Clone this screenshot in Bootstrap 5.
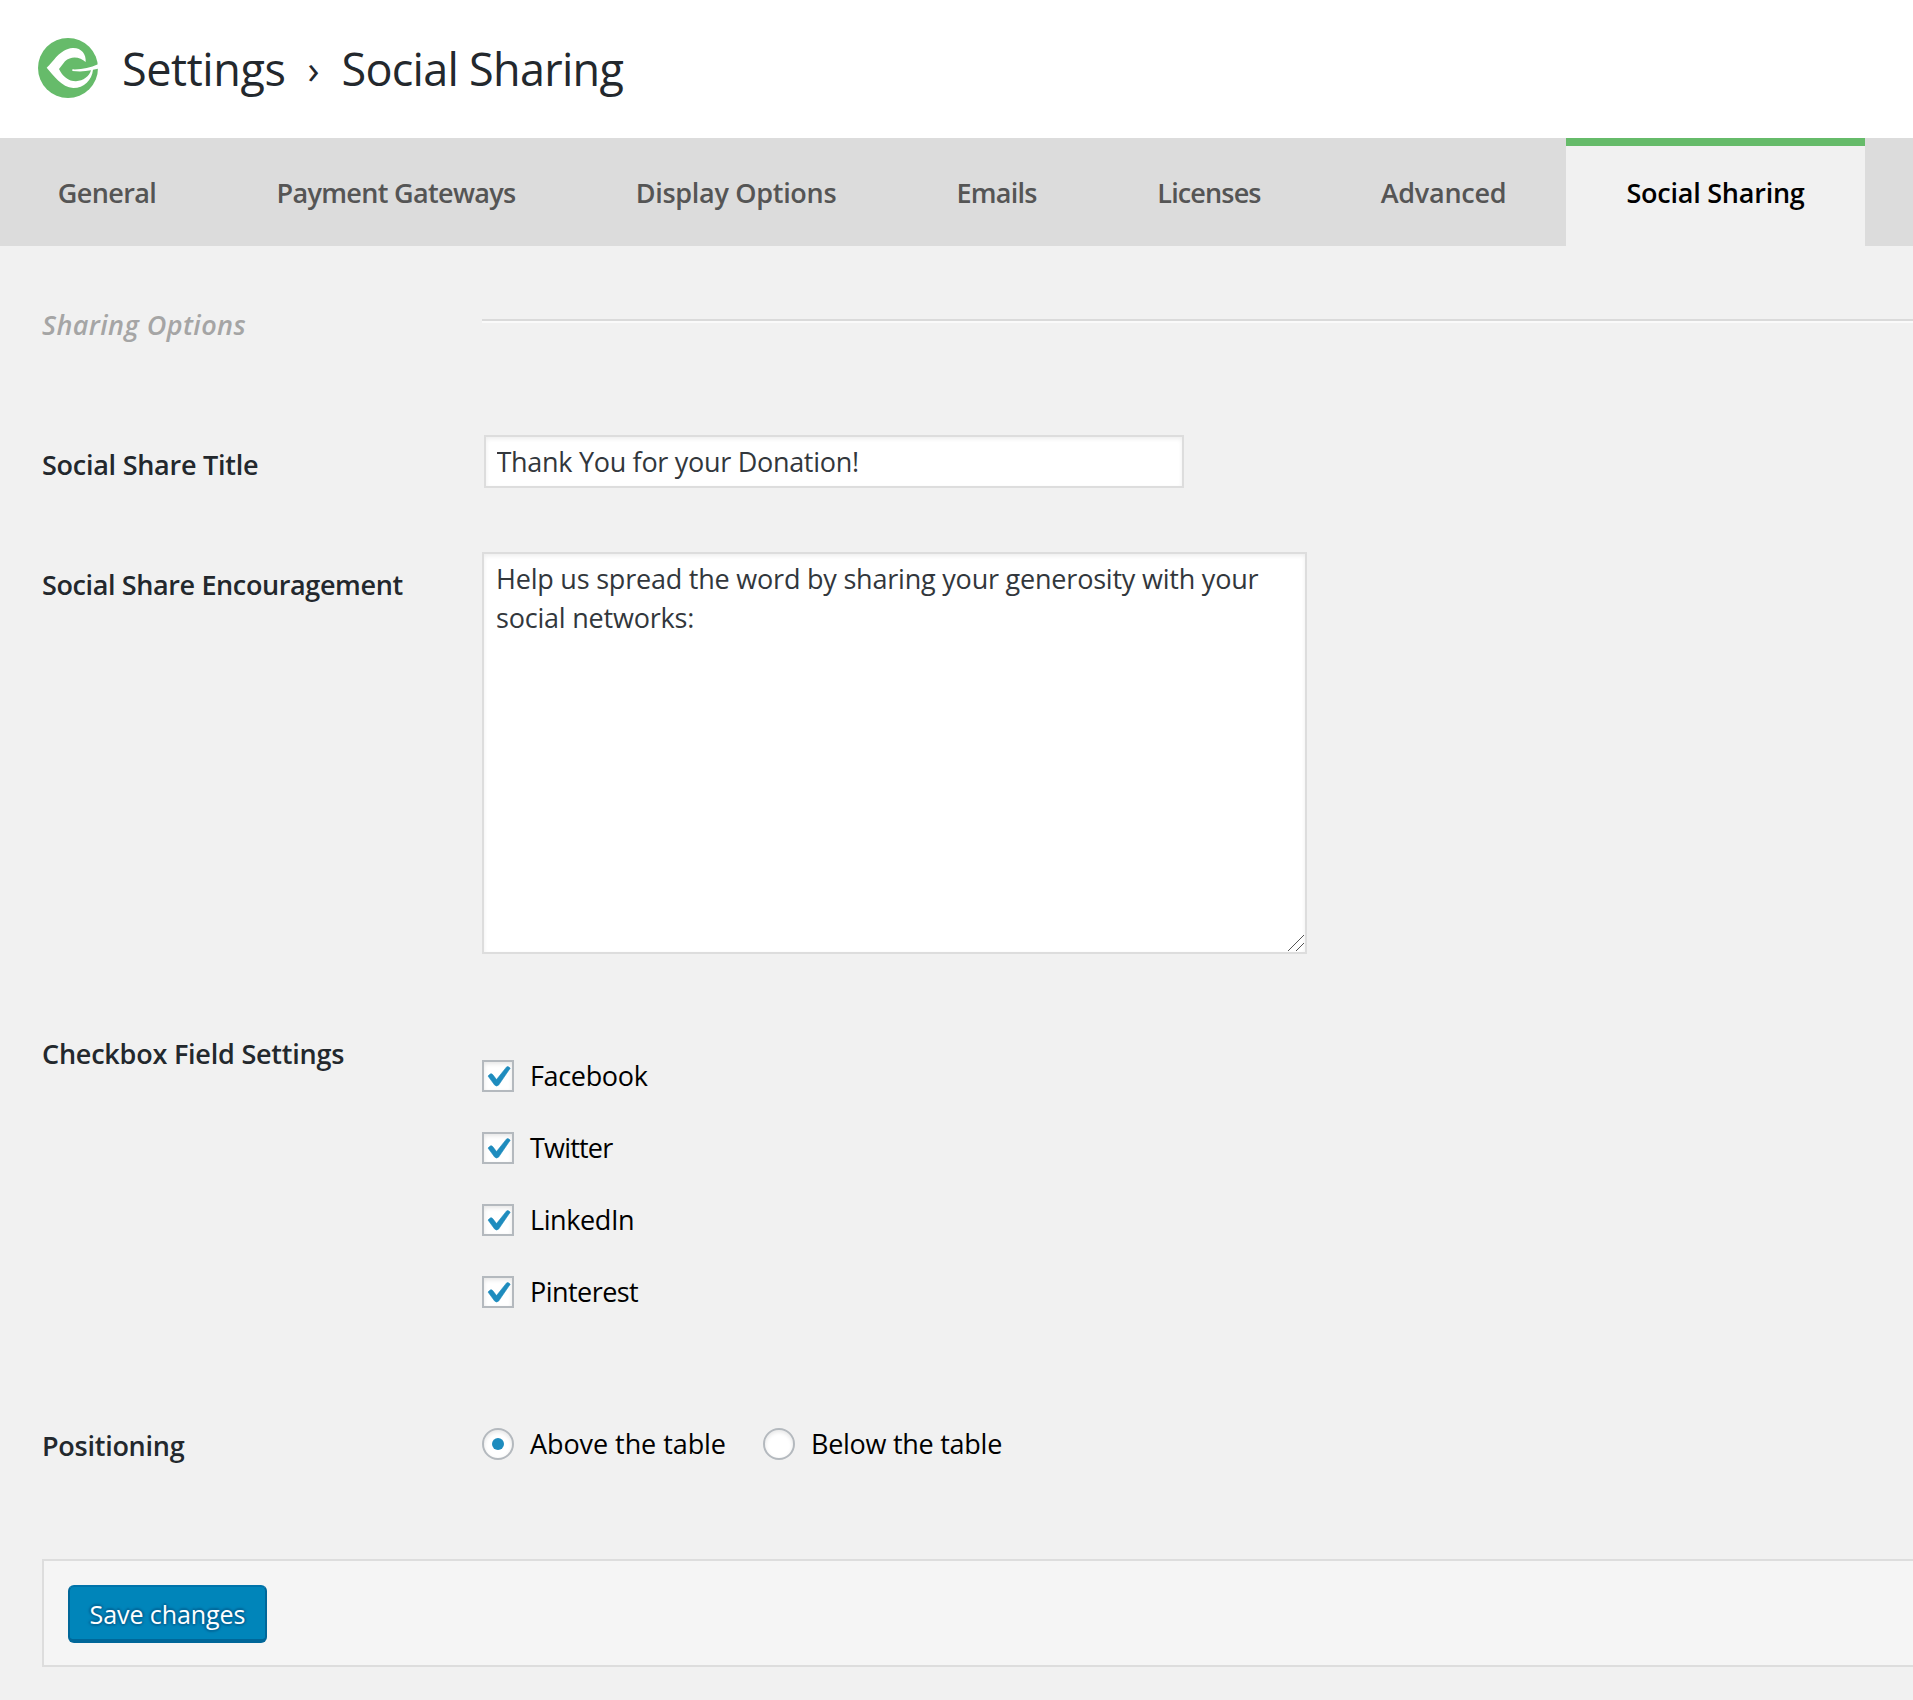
<!DOCTYPE html>
<html lang="en">
<head>
<meta charset="utf-8">
<meta name="viewport" content="width=device-width, initial-scale=1">
<title>Settings › Social Sharing</title>
<link rel="stylesheet" href="https://cdn.jsdelivr.net/npm/bootstrap@5.3.0/dist/css/bootstrap.min.css">
<style>
  body { background: #f1f1f1; color: #23282d; font-family: "Open Sans", "Noto Sans", sans-serif; font-size: 27px; line-height: 40px; overflow-x: hidden; }

  /* Header */
  .page-head { height: 138px; padding: 38px 38px 38px; }
  .page-head h1 { font-size: 45px; line-height: 60px; font-weight: 400; padding: 1px 0 0 24px; color: #23282d; }
  .page-head .crumb-a { letter-spacing: -.43px; }
  .page-head .crumb-sep { width: 56px; font-size: 40px; font-weight: 500; }
  .page-head .crumb-b { letter-spacing: -.72px; }

  /* Tabs */
  .settings-tabs { background: #dcdcdc; height: 108px; }
  .settings-tabs .nav-link { height: 108px; padding: 2px 0 0; color: #555; font-weight: 600; line-height: 40px; border-radius: 0; }
  .settings-tabs .nav-link.active { background: #f1f1f1; color: #000; box-shadow: inset 0 8px 0 #66bb6a; }
  .tab-general { width: 216px; letter-spacing: -.6px; }
  .settings-tabs .tab-general .nav-link { padding-right: 2px; }
  .tab-gateways { width: 360px; letter-spacing: -.66px; }
  .tab-display { width: 320px; letter-spacing: -.3px; }
  .tab-emails { width: 201px; letter-spacing: -.78px; }
  .tab-licenses { width: 224px; letter-spacing: -.86px; }
  .tab-advanced { width: 245px; letter-spacing: -.27px; }
  .tab-social { width: 299px; letter-spacing: -.23px; }

  /* Form rows */
  .settings-form { padding: 57px 0 0 42px; }
  .field-name { flex: 0 0 440px; font-weight: 600; letter-spacing: -.26px; }
  .field-name.section-name { font-style: italic; color: #a5a5a5; padding-top: 2px; letter-spacing: .42px; }
  .section-rule { margin-top: 16px; height: 4px; border-top: 2px solid #dadada; border-bottom: 2px solid #fafafa; }
  .row-section { height: 132px; }
  .row-title { height: 117px; }
  .row-text { height: 481px; }
  .row-checks { height: 393px; }
  .row-position { height: 133px; }
  .row-title .field-name { padding-top: 10px; }
  .row-text .field-name { padding-top: 13px; letter-spacing: -.38px; }
  .row-checks .field-name { padding-top: 1px; letter-spacing: -.22px; }

  .settings-form .form-control { border: 2px solid #ddd; border-radius: 0; background: #fff; color: #32373c; font-size: 27px; box-shadow: inset 0 2px 4px rgba(0,0,0,.07); }
  .title-input { width: 700px; height: 53px; margin-left: 2px; padding: 0 10px 0 10.5px; line-height: 40px; letter-spacing: -.3px; }
  .settings-form .text-area { width: 825px; height: 402px; padding: 5px 12px 4px 12px; line-height: 39px; letter-spacing: -.21px; resize: none; }
  .grip { right: 3px; bottom: 3px; pointer-events: none; }

  .choices { padding-top: 27px; gap: 40px; }
  .choice { min-height: 32px; line-height: 32px; color: #000; gap: 16px; }
  .choice .form-check-input { width: 32px; height: 32px; margin: 0; float: none; border: 2px solid #b4b9be; background-color: #fff; background-origin: border-box; background-size: 32px 32px; box-shadow: inset 0 2px 4px rgba(0,0,0,.1); flex: none; }
  .choice .form-check-input[type=checkbox] { border-radius: 0; }
  .choice .form-check-input[type=checkbox]:checked { border-color: #b4b9be; background-color: #fff; background-image: url("data:image/svg+xml,%3Csvg xmlns='http://www.w3.org/2000/svg' viewBox='0 0 32 32'%3E%3Cpath fill='%231e8cbe' d='M6 16 8.3 13.9Q9.7 13.3 10.7 14.6L14.5 19.6 24.6 6.9Q26 5.6 28.2 8.2L16.7 25Q14.6 27 12.6 25Z' stroke='%231e8cbe' stroke-width='.6' stroke-linejoin='round'/%3E%3C/svg%3E"); }
  .choice .form-check-input[type=radio]:checked { border-color: #b4b9be; background-color: #fff; background-image: url("data:image/svg+xml,%3Csvg xmlns='http://www.w3.org/2000/svg' viewBox='0 0 32 32'%3E%3Ccircle cx='16' cy='16' r='6' fill='%231e8cbe'/%3E%3C/svg%3E"); }
  .radios { padding-top: 2px; }
  .radio-above { width: 281px; }
  .ls-facebook { letter-spacing: -.34px; }
  .ls-twitter { letter-spacing: -.8px; }
  .ls-linkedin { letter-spacing: -.4px; }
  .ls-pinterest { letter-spacing: -.55px; }
  .ls-above { letter-spacing: -.07px; }
  .ls-below { letter-spacing: -.27px; }

  /* Save bar */
  .save-bar { height: 108px; padding: 24px; background: #f5f5f5; border: 2px solid #ddd; border-right: 0; }
  .btn-save { width: 199px; height: 58px; padding: 1px 0 0; border: 2px solid #006799; border-top-color: #0073aa; border-bottom-width: 4px; border-radius: 6px; background: #0085ba; color: #fff; font-size: 25px; line-height: 50px; letter-spacing: -.07px; text-shadow: 0 -2px 2px #006799, 2px 0 2px #006799, 0 2px 2px #006799, -2px 0 2px #006799; }
</style>
</head>
<body>
<header class="page-head bg-white d-flex align-items-start">
  <svg width="60" height="60" viewBox="24 24 180 180" aria-hidden="true">
    <circle cx="114" cy="114" r="90" fill="#66bb6a"/>
    <path fill="#fff" d="M50 113C71 95 88 58 128 54C154 53 169 72 167 96C152 82 125 75 105 94L87 117C97 138 115 154 138 154C160 152 178 140 183 121C165 125 145 125 127 123L127 118C155 119 180 114 204 103L204 116C199 117 194 118 189 119C186 150 162 174 130 174C95 172 70 135 50 113Z"/>
  </svg>
  <h1 class="d-flex mb-0"><span class="crumb-a">Settings</span><span class="crumb-sep text-center">›</span><span class="crumb-b">Social Sharing</span></h1>
</header>

<ul class="nav settings-tabs flex-nowrap text-center">
  <li class="nav-item tab-general"><a class="nav-link d-flex align-items-center justify-content-center" href="#">General</a></li>
  <li class="nav-item tab-gateways"><a class="nav-link d-flex align-items-center justify-content-center" href="#">Payment Gateways</a></li>
  <li class="nav-item tab-display"><a class="nav-link d-flex align-items-center justify-content-center" href="#">Display Options</a></li>
  <li class="nav-item tab-emails"><a class="nav-link d-flex align-items-center justify-content-center" href="#">Emails</a></li>
  <li class="nav-item tab-licenses"><a class="nav-link d-flex align-items-center justify-content-center" href="#">Licenses</a></li>
  <li class="nav-item tab-advanced"><a class="nav-link d-flex align-items-center justify-content-center" href="#">Advanced</a></li>
  <li class="nav-item tab-social"><a class="nav-link active d-flex align-items-center justify-content-center" aria-current="page" href="#">Social Sharing</a></li>
</ul>

<form class="settings-form">
  <div class="row-section d-flex align-items-start">
    <div class="field-name section-name">Sharing Options</div>
    <div class="section-rule flex-grow-1"></div>
  </div>
  <div class="row-title d-flex align-items-start">
    <label class="field-name" for="share-title">Social Share Title</label>
    <input class="form-control title-input" id="share-title" type="text" value="Thank You for your Donation!">
  </div>
  <div class="row-text d-flex align-items-start">
    <label class="field-name" for="share-text">Social Share Encouragement</label>
    <div class="position-relative">
      <textarea class="form-control text-area d-block" id="share-text">Help us spread the word by sharing your generosity with your social networks:</textarea>
      <svg class="grip position-absolute" width="16" height="16" viewBox="0 0 16 16" fill="none" stroke="#555" stroke-width="1" aria-hidden="true"><path d="M0 16 16 0M8 16l8-8"/></svg>
    </div>
  </div>
  <div class="row-checks d-flex align-items-start">
    <div class="field-name">Checkbox Field Settings</div>
    <div class="choices d-flex flex-column">
      <label class="choice d-flex ls-facebook"><input class="form-check-input" type="checkbox" checked>Facebook</label>
      <label class="choice d-flex ls-twitter"><input class="form-check-input" type="checkbox" checked>Twitter</label>
      <label class="choice d-flex ls-linkedin"><input class="form-check-input" type="checkbox" checked>LinkedIn</label>
      <label class="choice d-flex ls-pinterest"><input class="form-check-input" type="checkbox" checked>Pinterest</label>
    </div>
  </div>
  <div class="row-position d-flex align-items-start">
    <div class="field-name">Positioning</div>
    <div class="radios d-flex">
      <label class="choice d-flex radio-above ls-above"><input class="form-check-input" type="radio" name="position" checked>Above the table</label>
      <label class="choice d-flex ls-below"><input class="form-check-input" type="radio" name="position">Below the table</label>
    </div>
  </div>
  <div class="save-bar">
    <button class="btn btn-save d-block" type="button">Save changes</button>
  </div>
</form>
<script src="https://cdn.jsdelivr.net/npm/bootstrap@5.3.0/dist/js/bootstrap.bundle.min.js"></script>
</body>
</html>
